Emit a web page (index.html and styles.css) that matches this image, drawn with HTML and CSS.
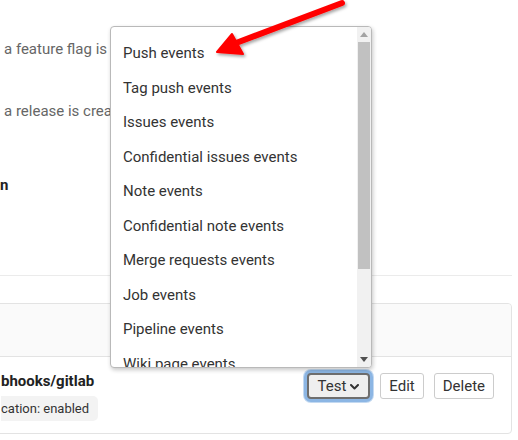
FILE: index.html
```html
<!DOCTYPE html>
<html>
<head>
<meta charset="utf-8">
<link rel="stylesheet" href="styles.css">
</head>
<body>
<div class="page">
  <div class="triggers">
    <p class="help first">a feature flag is</p>
    <p class="help second">a release is created</p>
    <p class="label">n</p>
  </div>
  <div class="rule"></div>
  <div class="card">
    <div class="card-header"></div>
    <div class="card-body">
      <div class="hook-info">
        <div class="hook-url">bhooks/gitlab</div>
        <span class="badge">cation: enabled</span>
      </div>
      <div class="actions">
        <button class="btn btn-test">Test <svg class="chev" width="9" height="6" viewBox="0 0 9 6"><path d="M1 1 L4.5 4.5 L8 1" fill="none" stroke="#333" stroke-width="2" stroke-linecap="round" stroke-linejoin="round"/></svg></button>
        <button class="btn">Edit</button>
        <button class="btn">Delete</button>
      </div>
    </div>
  </div>

  <div class="dropdown">
    <ul class="options">
      <li>Push events</li>
      <li>Tag push events</li>
      <li>Issues events</li>
      <li>Confidential issues events</li>
      <li>Note events</li>
      <li>Confidential note events</li>
      <li>Merge requests events</li>
      <li>Job events</li>
      <li>Pipeline events</li>
      <li>Wiki page events</li>
    </ul>
    <div class="scrollbar">
      <div class="sb-btn"><svg width="8" height="5" viewBox="0 0 8 5"><path d="M0 5 L4 0 L8 5 Z" fill="#a3a3a3"/></svg></div>
      <div class="sb-track"><div class="sb-thumb"></div></div>
      <div class="sb-btn"><svg width="8" height="5" viewBox="0 0 8 5"><path d="M0 0 L4 5 L8 0 Z" fill="#505050"/></svg></div>
    </div>
  </div>

  <svg class="arrow" width="518" height="80" viewBox="0 0 518 80">
    <defs>
      <filter id="sh" x="-20%" y="-50%" width="140%" height="200%">
        <feDropShadow dx="1.5" dy="2" stdDeviation="1.5" flood-color="#000" flood-opacity="0.35"/>
      </filter>
    </defs>
    <g filter="url(#sh)">
      <line x1="342" y1="3" x2="236" y2="43" stroke="#ff0000" stroke-width="6" stroke-linecap="round"/>
      <polygon points="217,52 232,34 243,54" fill="#ff0000" stroke="#ff0000" stroke-width="2" stroke-linejoin="round"/>
    </g>
  </svg>
</div>
</body>
</html>
```

FILE: styles.css
```css
* { box-sizing: border-box; }
html, body { margin: 0; padding: 0; background: #fff; }
body {
  font-family: Roboto, "Liberation Sans", sans-serif;
  color: #333;
  width: 518px;
  height: 440px;
  overflow: hidden;
}
.page { position: relative; width: 518px; height: 440px; }

.triggers { padding-top: 39px; }
.help {
  margin: 0;
  padding-left: 4px;
  font-size: 15px;
  line-height: 20px;
  color: #666;
  white-space: nowrap;
}
.help.second { margin-top: 42px; }
.label {
  margin: 54px 0 0 0;
  font-size: 15px;
  line-height: 20px;
  font-weight: 700;
  color: #222;
}

.rule {
  margin-top: 80px;
  width: 512px;
  height: 1px;
  background: #ebebeb;
}

.card {
  margin-top: 27px;
  margin-left: -10px;
  width: 522px;
  height: 131px;
  border: 1px solid #e3e3e3;
  border-radius: 4px;
  display: flex;
  flex-direction: column;
}
.card-header {
  height: 53px;
  background: #fafafa;
  border-bottom: 1px solid #e3e3e3;
  border-radius: 4px 4px 0 0;
}
.card-body {
  flex: 1;
  display: flex;
  justify-content: space-between;
  align-items: flex-start;
  padding: 14px 17px 0 10px;
}
.hook-info { display: flex; flex-direction: column; align-items: flex-start; }
.hook-url {
  font-size: 15px;
  line-height: 20px;
  font-weight: 700;
  color: #222;
}
.badge {
  margin-top: 5px;
  height: 25px;
  line-height: 25px;
  padding: 0 9px 0 0;
  font-size: 13px;
  background: #f3f3f3;
  border-radius: 0 5px 5px 0;
  color: #333;
}

.actions {
  display: flex;
  gap: 10px;
  padding-top: 2px;
}
.btn {
  font-family: Roboto, "Liberation Sans", sans-serif;
  font-size: 15px;
  color: #333;
  height: 26px;
  line-height: 24px;
  padding: 0 8px;
  background: #fff;
  border: 1px solid #cccccc;
  border-radius: 3px;
  display: flex;
  align-items: center;
}
.btn-test {
  padding: 0 9px 0 9px;
  background: #efefef;
  border: 2px solid #6e6e6e;
  border-radius: 4px;
  box-shadow: 0 0 0 3px #8cb6e4, 0 0 0 4px #c3d9f1;
  gap: 4px;
}
.chev { display: block; margin-top: 1px; }

.dropdown {
  position: absolute;
  left: 110px;
  top: 26px;
  width: 262px;
  height: 342px;
  background: #fff;
  border: 1px solid #b9b9b9;
  border-radius: 4px;
  box-shadow: 1px 2px 4px rgba(0,0,0,0.22);
  overflow: hidden;
  display: flex;
}
.options {
  list-style: none;
  margin: 0;
  padding: 9px 0 0 12px;
  flex: 1;
}
.options li {
  font-size: 15px;
  line-height: 34.55px;
  height: 34.55px;
  color: #333;
  white-space: nowrap;
}
.scrollbar {
  width: 14px;
  background: #f1f1f1;
  display: flex;
  flex-direction: column;
}
.sb-btn {
  height: 15px;
  display: flex;
  align-items: center;
  justify-content: center;
}
.sb-btn svg { display: block; }
.sb-track { flex: 1; padding: 0 1px 0 1px; }
.sb-thumb {
  height: 227px;
  background: #c1c1c1;
}

.arrow {
  position: absolute;
  left: 0;
  top: 0;
  pointer-events: none;
}
```
